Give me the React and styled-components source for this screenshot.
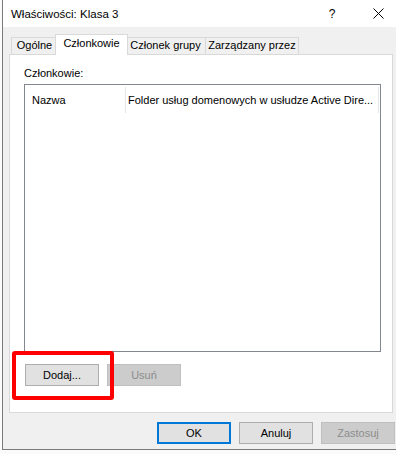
import React from 'react';
import styled, { createGlobalStyle } from 'styled-components';

const Global = createGlobalStyle`
  html, body {
    margin: 0;
    padding: 0;
    background: #fbfbfb;
  }
  * {
    box-sizing: border-box;
  }
`;

const Page = styled.div`
  position: relative;
  width: 396px;
  height: 454px;
  overflow: hidden;
  font-family: "Segoe UI", "Liberation Sans", Arial, sans-serif;
  font-size: 11px;
  color: #000;
`;

const Window = styled.div`
  margin-left: 2px;
  width: 394px;
  height: 450px;
  border-left: 1px solid #7a7a7a;
  border-bottom: 1px solid #7a7a7a;
  display: flex;
  flex-direction: column;
  overflow: hidden;
`;

const TitleBar = styled.div`
  height: 27px;
  flex-shrink: 0;
  background: #fff;
  display: flex;
  align-items: center;
`;

const Title = styled.div`
  flex: 1;
  padding-left: 8px;
  font-size: 11.5px;
`;

const HelpButton = styled.div`
  width: 46px;
  height: 27px;
  display: flex;
  align-items: center;
  justify-content: center;
  font-size: 12px;
`;

const CloseButton = styled.div`
  width: 41px;
  height: 27px;
  display: flex;
  align-items: center;
  padding-left: 18px;
`;

const Body = styled.div`
  flex: 1;
  background: #f0f0f0;
  padding: 7px 0 0 6px;
`;

const TabStrip = styled.div`
  display: flex;
  align-items: flex-end;
  height: 20px;
  padding-left: 2px;
  position: relative;
  z-index: 1;
`;

const Tab = styled.div`
  width: ${p => (p.$active ? p.$w + 4 : p.$w)}px;
  height: ${p => (p.$active ? 21 : 17)}px;
  margin: 0 ${p => (p.$active ? -3 : -1)}px ${p => (p.$active ? -1 : 0)}px ${p => (p.$active ? -2 : 0)}px;
  border: 1px solid #d9d9d9;
  border-bottom: none;
  background: ${p => (p.$active ? '#fff' : '#f0f0f0')};
  position: relative;
  z-index: ${p => (p.$active ? 2 : 1)};
  display: flex;
  justify-content: center;
  padding-top: ${p => (p.$active ? 1 : 0)}px;
  line-height: 15px;
  white-space: nowrap;
`;

const Panel = styled.div`
  width: 384px;
  height: 359px;
  border: 1px solid #d9d9d9;
  background: #fff;
  padding: 11px 11px 0 14px;
  display: flex;
  flex-direction: column;
`;

const Label = styled.div`
  line-height: 15px;
  margin-bottom: 3px;
`;

const ListBox = styled.div`
  width: 357px;
  height: 268px;
  border: 1px solid #828790;
  background: #fff;
`;

const Header = styled.div`
  display: flex;
  height: 26px;
  align-items: center;
`;

const HeaderCell = styled.div`
  width: ${p => p.$w}px;
  padding-left: ${p => p.$pad}px;
  height: 100%;
  display: flex;
  align-items: center;
  border-right: 1px solid #e5e5e5;
  white-space: nowrap;
  overflow: hidden;
  margin: 3px 0 0;
`;

const ButtonRow = styled.div`
  display: flex;
  gap: 8px;
  margin-top: ${p => p.$top}px;
  margin-left: ${p => p.$left || 0}px;
  justify-content: ${p => (p.$end ? 'flex-end' : 'flex-start')};
  width: ${p => (p.$end ? '386px' : 'auto')};
`;

const Button = styled.div`
  width: 74px;
  height: 22px;
  display: flex;
  align-items: center;
  justify-content: center;
  background: ${p => (p.$disabled ? '#cccccc' : '#e1e1e1')};
  color: ${p => (p.$disabled ? '#8d8d8d' : '#000')};
  border: ${p => (p.$default ? '2px solid #0078d7' : p.$disabled ? '1px solid #bfbfbf' : '1px solid #adadad')};
`;

const Highlight = styled.div`
  position: absolute;
  left: 12px;
  top: 351px;
  width: 102px;
  height: 49px;
  border: 4px solid #ff0000;
  border-radius: 3px;
  pointer-events: none;
`;

const tabs = [
  { label: 'Ogólne', w: 47 },
  { label: 'Członkowie', w: 69, active: true },
  { label: 'Członek grupy', w: 81 },
  { label: 'Zarządzany przez', w: 94 },
];

export default function App() {
  return (
    <Page>
      <Global />
      <Window>
        <TitleBar>
          <Title>Właściwości: Klasa 3</Title>
          <HelpButton>?</HelpButton>
          <CloseButton>
            <svg width="11" height="11" viewBox="0 0 11 11">
              <path d="M0.5 0.5 L10.5 10.5 M10.5 0.5 L0.5 10.5" stroke="#000" strokeWidth="1" />
            </svg>
          </CloseButton>
        </TitleBar>
        <Body>
          <TabStrip>
            {tabs.map(t => (
              <Tab key={t.label} $w={t.w} $active={t.active}>
                {t.label}
              </Tab>
            ))}
          </TabStrip>
          <Panel>
            <Label>Członkowie:</Label>
            <ListBox>
              <Header>
                <HeaderCell $w={101} $pad={7}>Nazwa</HeaderCell>
                <HeaderCell $w={253} $pad={2}>Folder usług domenowych w usłudze Active Dire...</HeaderCell>
              </Header>
            </ListBox>
            <ButtonRow $top={12} $left={1}>
              <Button>Dodaj...</Button>
              <Button $disabled>Usuń</Button>
            </ButtonRow>
          </Panel>
          <ButtonRow $top={9} $end>
            <Button $default>OK</Button>
            <Button>Anuluj</Button>
            <Button $disabled>Zastosuj</Button>
          </ButtonRow>
        </Body>
      </Window>
      <Highlight />
    </Page>
  );
}
